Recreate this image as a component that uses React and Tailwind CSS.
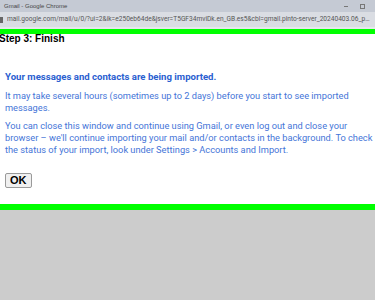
export default function App() {
  return (
    <div className="w-[375px] h-[300px] flex flex-col bg-[#cccccc] overflow-hidden" style={{ fontFamily: '"Liberation Sans", Arial, sans-serif' }}>
      {/* window title */}
      <div className="h-[12px] bg-[#c5cad4] flex items-center justify-between pl-[4px] pr-[10px]">
        <span className="text-[6px] text-[#444] leading-none">Gmail - Google Chrome</span>
        <div className="flex items-center gap-[12px] text-[#666]">
          <span className="w-[4px] h-px bg-[#777] block" />
          <span className="w-[5px] h-[5px] border border-[#777] block" />
        </div>
      </div>
      {/* address bar */}
      <div className="h-[15px] bg-[#dadde3] flex items-center gap-[4px] pr-[3px] overflow-hidden">
        <span className="w-[3px] h-[6px] bg-[#666] block shrink-0" />
        <span className="min-w-0 truncate text-[6.6px] text-[#555] leading-none" style={{ fontFamily: 'Roboto, sans-serif' }}>
          mail.google.com/mail/u/0/?ui=2&amp;ik=e250eb64de&amp;jsver=T5GF34mviDk.en_GB.es5&amp;cbl=gmail.pinto-server_20240403.06_p0&amp;sts=1&amp;tf=-
        </span>
      </div>
      <div className="h-[2px] bg-[#e6e8ec]" />
      <div className="h-[5px] bg-[#00ff00]" />
      {/* dialog content */}
      <div className="h-[170px] bg-white flex flex-col overflow-hidden">
        <h2 className="text-[10px] font-bold text-black leading-none -ml-px">Step 3: Finish</h2>
        <div className="px-[5px] mt-[27px] text-[9.25px] leading-[12px] text-[#4575d8] whitespace-nowrap" style={{ fontFamily: 'Roboto, sans-serif' }}>
          <p className="font-bold text-[9.6px] text-[#2a60d0]">Your messages and contacts are being imported.</p>
          <p className="mt-[7px]">
            It may take several hours (sometimes up to 2 days) before you start to see imported<br />messages.
          </p>
          <p className="mt-[6px]">
            You can close this window and continue using Gmail, or even log out and close your<br />
            browser – we'll continue importing your mail and/or contacts in the background. To check<br />
            the status of your import, look under Settings &gt; Accounts and Import.
          </p>
          <button className="mt-[17px] h-[15px] px-[4px] bg-[#f0f0f0] border border-[#9a9a9a] rounded-[2px] text-[11px] font-bold text-black leading-none" style={{ fontFamily: '"Liberation Sans", Arial, sans-serif' }}>
            OK
          </button>
        </div>
      </div>
      <div className="h-[6px] bg-[#00ff00]" />
    </div>
  );
}
